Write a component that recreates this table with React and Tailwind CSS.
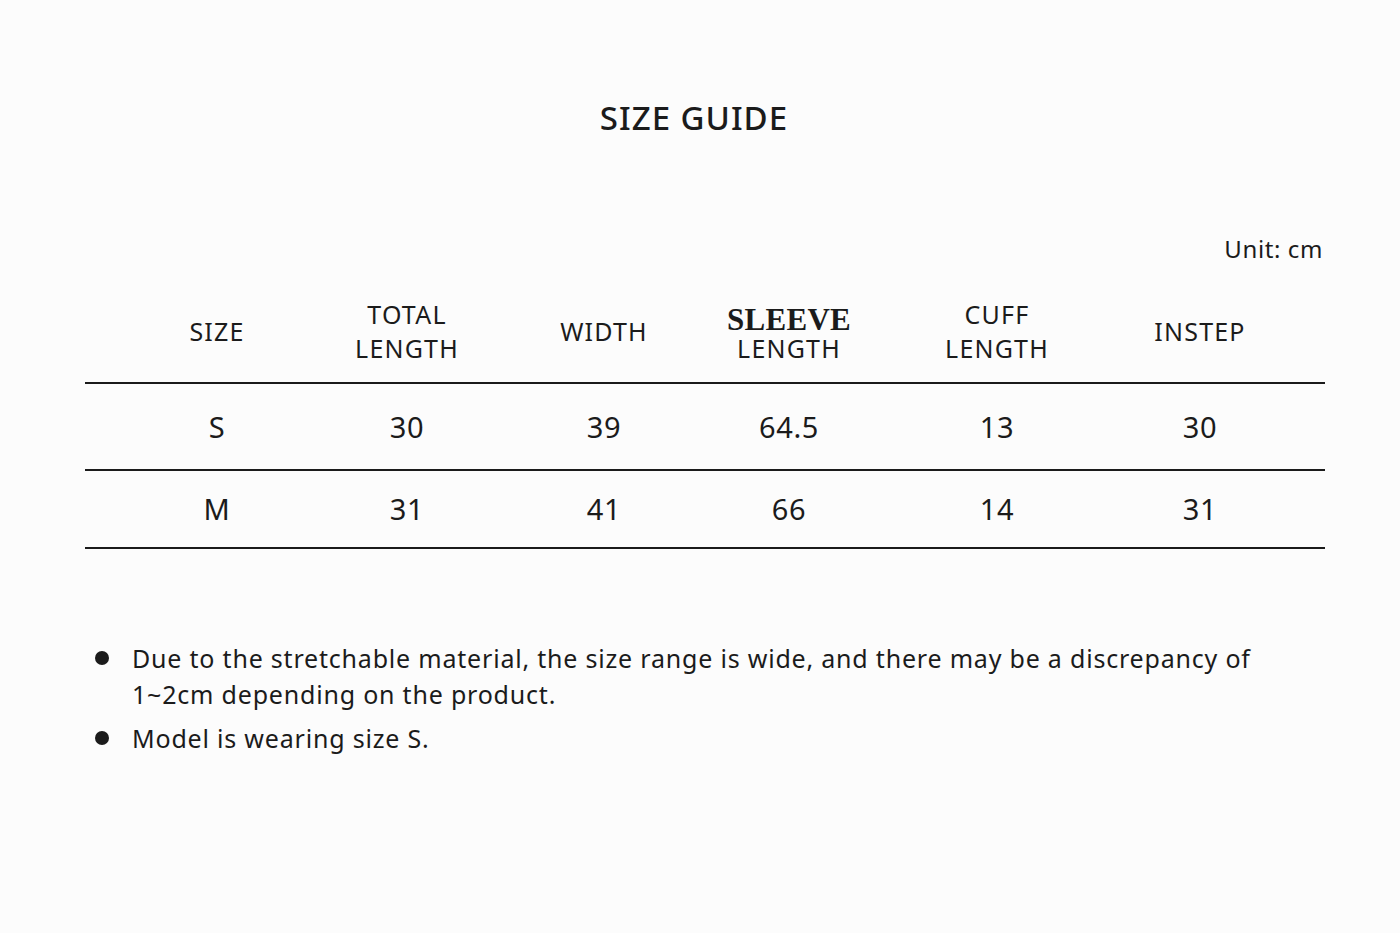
const COLUMNS = [
  { key: "size", label: ["SIZE"] },
  { key: "total", label: ["TOTAL", "LENGTH"] },
  { key: "width", label: ["WIDTH"] },
  { key: "sleeve", label: ["SLEEVE", "LENGTH"], serifTop: true },
  { key: "cuff", label: ["CUFF", "LENGTH"] },
  { key: "instep", label: ["INSTEP"] },
];

const ROWS = [
  { size: "S", total: "30", width: "39", sleeve: "64.5", cuff: "13", instep: "30" },
  { size: "M", total: "31", width: "41", sleeve: "66", cuff: "14", instep: "31" },
];

const NOTES = [
  "Due to the stretchable material, the size range is wide, and there may be a discrepancy of 1~2cm depending on the product.",
  "Model is wearing size S.",
];

const grid =
  "grid grid-cols-[194px_186px_208px_162px_254px_152px] pl-[35px]";

export default function App() {
  return (
    <div className="min-h-[933px] w-[1400px] bg-[#fcfcfc] text-[#1b1b1b] font-['Noto_Sans',sans-serif]">
      {/* Title */}
      <h1 className="pt-[98px] pr-[12px] text-center text-[33px] leading-[40px] font-medium tracking-[1px]">
        SIZE GUIDE
      </h1>

      <div className="mx-[75px] mt-[96px]">
        <div className="text-right text-[24px] leading-[30px] tracking-[0.6px] pr-[2px]">
          Unit: cm
        </div>

        {/* Table */}
        <div className="ml-[10px] mt-[26px]">
          <div className={`${grid} h-[92px] items-center pb-[10px]`}>
            {COLUMNS.map((col) => (
              <div
                key={col.key}
                className="text-center text-[25px] leading-[34px] tracking-[1.2px]"
              >
                {col.serifTop ? (
                  <>
                    <div className="pt-[2px] font-['Liberation_Serif',serif] text-[31px] leading-[31px] font-semibold tracking-[0.3px]">
                      {col.label[0]}
                    </div>
                    <div className="leading-[26px]">{col.label[1]}</div>
                  </>
                ) : (
                  col.label.map((line) => <div key={line}>{line}</div>)
                )}
              </div>
            ))}
          </div>
          <div className="h-[2px] bg-[#1b1b1b]" />
          {ROWS.map((row, r) => (
            <div key={row.size}>
              <div
                className={`${grid} items-center text-[29px] tracking-[0.6px] ${
                  r === 0 ? "h-[85px]" : "h-[76px]"
                }`}
              >
                {COLUMNS.map((col) => (
                  <div key={col.key} className="text-center">
                    {row[col.key]}
                  </div>
                ))}
              </div>
              <div className="h-[2px] bg-[#1b1b1b]" />
            </div>
          ))}
        </div>

        {/* Notes */}
        <ul className="mt-[91px] ml-[20px] flex flex-col gap-[8px]">
          {NOTES.map((note) => (
            <li
              key={note}
              className="flex text-[25px] leading-[36px] tracking-[0.8px]"
            >
              <span className="mt-[11px] mr-[23px] h-[14px] w-[14px] shrink-0 rounded-full bg-[#1b1b1b]" />
              <span className="max-w-[1160px]">{note}</span>
            </li>
          ))}
        </ul>
      </div>
    </div>
  );
}
